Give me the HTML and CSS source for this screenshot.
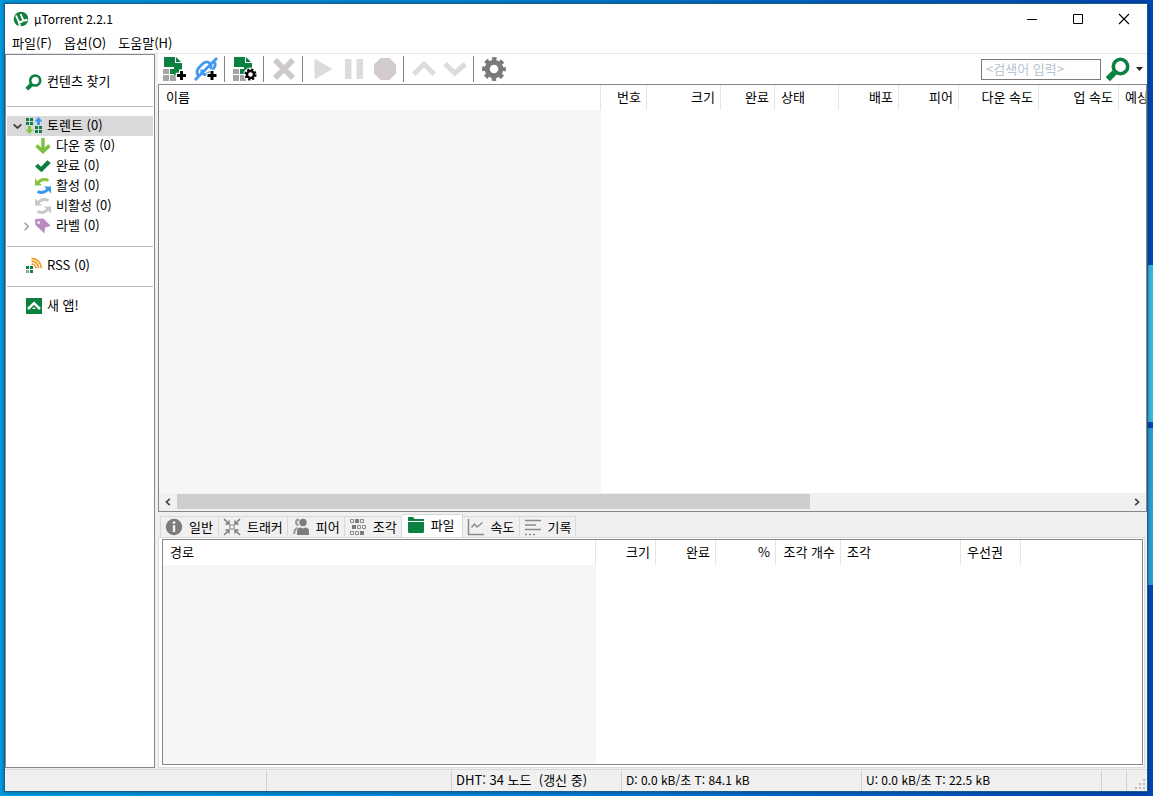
FILE: index.html
```html
<!DOCTYPE html>
<html lang="ko">
<head>
<meta charset="utf-8">
<title>µTorrent 2.2.1</title>
<link rel="stylesheet" href="styles.css">
</head>
<body class="desktop">
<div class="window">
  <header class="titlebar">
    <svg class="logo" width="16" height="16" viewBox="0 0 16 16"><circle cx="8" cy="8" r="7.3" fill="#12803f"/><path d="M3 4.5L5 9.2Q6.2 11.6 8.6 10.8Q10.4 10 9.6 7.8L7.6 3M9.8 8.6Q11 10.4 14.4 8.6M5.4 10Q6.6 13 7 15.4" fill="none" stroke="#fff" stroke-width="1.9"/></svg>
    <h1 class="title">µTorrent 2.2.1</h1>
    <div class="caption">
      <button class="cap-btn" aria-label="최소화"><svg width="12" height="12"><path d="M1 6.5H11" stroke="#000"/></svg></button>
      <button class="cap-btn" aria-label="최대화"><svg width="12" height="12"><path d="M1.5 1.5H10.5V10.5H1.5Z" stroke="#000" fill="none"/></svg></button>
      <button class="cap-btn" aria-label="닫기"><svg width="12" height="12"><path d="M1 1L11 11M11 1L1 11" stroke="#000" stroke-width="1.1"/></svg></button>
    </div>
  </header>
  <nav class="menubar">
    <button class="menu">파일(F)</button>
    <button class="menu">옵션(O)</button>
    <button class="menu">도움말(H)</button>
  </nav>

  <main class="workspace">
    <nav class="sidebar">
      <ul class="group group-find">
        <li><a class="item" href="#find"><span class="twist"></span>
          <svg class="ico" width="18" height="18" viewBox="0 0 18 18"><path d="M6.5 11.5L1.8 16.2" stroke="#0b8040" stroke-width="4"/><circle cx="10.2" cy="7.5" r="5" fill="#fff" stroke="#0b8040" stroke-width="2.6"/></svg>
          <span class="label">컨텐츠 찾기</span></a></li>
      </ul>
      <ul class="group group-torrents">
        <li><a class="item selected" href="#torrents">
          <svg class="twist" width="9" height="9" viewBox="0 0 9 9"><path d="M.7 2.3L4.5 6L8.3 2.3" fill="none" stroke="#404040" stroke-width="1.8"/></svg>
          <svg class="ico" width="18" height="18" viewBox="0 0 18 18"><path d="M1 1h3v3H1zM5 1h3v3H5zM1 5h3v3H1zM5 5h3v3H5zM10 9h3v3h-3zM14 9h3v3h-3zM10 13h3v3h-3zM14 13h3v3h-3z" fill="#0b8040"/><path d="M13.5 0L17.5 4.6H15V8H12V4.6H9.5Z" fill="#3b97ee"/><path d="M4.5 17L8.5 12.4H6V9H3V12.4H.5Z" fill="#86c440"/></svg>
          <span class="label">토렌트 (0)</span></a>
          <ul class="children">
            <li><a class="item" href="#down"><span class="twist"></span>
              <svg class="ico" width="18" height="18" viewBox="0 0 18 18"><path d="M9 1V14M2.5 8.500L9 14.600L15.500 8.500" fill="none" stroke="#7cc142" stroke-width="3.4"/></svg>
              <span class="label">다운 중 (0)</span></a></li>
            <li><a class="item" href="#done"><span class="twist"></span>
              <svg class="ico" width="18" height="18" viewBox="0 0 18 18"><path d="M1 9.5L4 6.8L7 9.8L13.4 3.2L16.8 6L7.5 15.2Z" fill="#0b8040"/></svg>
              <span class="label">완료 (0)</span></a></li>
            <li><a class="item" href="#active"><span class="twist"></span>
              <svg class="ico" width="18" height="18" viewBox="0 0 18 18"><path d="M1 1.5V8.5H8Z" fill="#86c440"/><path d="M4 6Q7.500 .8 14.500 3.400" fill="none" stroke="#86c440" stroke-width="2.8"/><g transform="rotate(180 9 9)"><path d="M1 1.5V8.5H8Z" fill="#3b97ee"/><path d="M4 6Q7.500 .8 14.500 3.400" fill="none" stroke="#3b97ee" stroke-width="2.8"/></g></svg>
              <span class="label">활성 (0)</span></a></li>
            <li><a class="item" href="#inactive"><span class="twist"></span>
              <svg class="ico" width="18" height="18" viewBox="0 0 18 18"><path d="M1 1.5V8.5H8Z" fill="#c9c9c9"/><path d="M4 6Q7.500 .8 14.500 3.400" fill="none" stroke="#c9c9c9" stroke-width="2.8"/><g transform="rotate(180 9 9)"><path d="M1 1.5V8.5H8Z" fill="#c9c9c9"/><path d="M4 6Q7.500 .8 14.500 3.400" fill="none" stroke="#c9c9c9" stroke-width="2.8"/></g></svg>
              <span class="label">비활성 (0)</span></a></li>
            <li><a class="item" href="#labels">
              <svg class="twist" width="9" height="9" viewBox="0 0 9 9"><path d="M2.6 .7L6.3 4.5L2.6 8.3" fill="none" stroke="#a0a0a0" stroke-width="1.6"/></svg>
              <svg class="ico" width="18" height="18" viewBox="0 0 18 18"><path fill-rule="evenodd" d="M1 2L9.5 1.5L16.8 9L11 10.5L10.5 16.5L1.5 8ZM4.6 4.2a1.3 1.3 0 1 0 .1 0Z" fill="#bb8abf"/></svg>
              <span class="label">라벨 (0)</span></a></li>
          </ul></li>
      </ul>
      <ul class="group">
        <li><a class="item" href="#rss"><span class="twist"></span>
          <svg class="ico" width="18" height="18" viewBox="0 0 18 18"><path d="M1 9h3v3H1zM5 9h3v3H5zM5 13h3v3H5z" fill="#0b8040"/><path d="M1 13h3v3H1z" fill="#a0a0a0"/><path d="M6.5 7A4.5 4.5 0 0 1 11 11.3M6.5 4.2A7.2 7.2 0 0 1 13.7 11.3M6.5 1.4A10 10 0 0 1 16.4 11.3" fill="none" stroke="#f29a1f" stroke-width="1.7"/></svg>
          <span class="label">RSS (0)</span></a></li>
      </ul>
      <ul class="group">
        <li><a class="item" href="#apps"><span class="twist"></span>
          <svg class="ico" width="18" height="18" viewBox="0 0 18 18"><path d="M1 1H17V17H1Z" fill="#0b8040"/><path d="M3 12L9 6.2L15 12" fill="none" stroke="#fff" stroke-width="2.5"/><path d="M7 12L9 10L11 12Z" fill="#fff"/></svg>
          <span class="label">새 앱!</span></a></li>
      </ul>
    </nav>

    <section class="content">
      <div class="toolbar">
        <button class="tool" aria-label="토렌트 추가"><svg width="24" height="24" viewBox="0 0 24 24"><path d="M1 0H12V6H19V18H11V10H1Z" fill="#0b8040"/><path d="M13 0V5H18Z" fill="#0b8040"/><path d="M0 12h6v5H0zM0 18h6v6H0zM7 18h6v6H7z" fill="#a5a5a5"/><path d="M7 12h6v5H7z" fill="#0b8040"/><path d="M18.5 12.5V24M12.7 18.2H24" stroke="#fff" stroke-width="5"/><path d="M18.5 14V23M14 18.5H23" stroke="#000" stroke-width="3"/></svg></button>
        <button class="tool" aria-label="URL로 추가"><svg width="24" height="24" viewBox="0 0 24 24"><g fill="none" stroke="#4499ee" stroke-width="2.8"><path d="M1 23L23 1"/><path d="M5 19Q1 15 5 10.5L8.5 7Q12.5 3 16 6.5Q18 9 16 11.5"/><path d="M8 12.5Q7 16 10 17.5Q13 18 16 15L19.5 11.5Q23 7.5 19.5 4.5"/></g><path d="M18 12.8V24M12.5 18.5H24" stroke="#fff" stroke-width="5"/><path d="M18 14V23M13.5 18.5H22.5" stroke="#000" stroke-width="3"/></svg></button>
        <span class="sep"></span>
        <button class="tool" aria-label="새 토렌트 만들기"><svg width="24" height="24" viewBox="0 0 24 24"><path d="M1 0H12V6H19V18H11V10H1Z" fill="#0b8040"/><path d="M13 0V5H18Z" fill="#0b8040"/><path d="M0 12h6v5H0zM0 18h6v6H0zM7 18h6v6H7z" fill="#a5a5a5"/><path d="M7 12h6v5H7z" fill="#0b8040"/><circle cx="17.5" cy="17.5" r="7" fill="#fff"/><circle cx="17.5" cy="17.5" r="3.5" fill="none" stroke="#000" stroke-width="2.4"/><circle cx="17.5" cy="17.5" r="5.1" fill="none" stroke="#000" stroke-width="2" stroke-dasharray="2.2 1.805"/></svg></button>
        <span class="sep"></span>
        <button class="tool" aria-label="삭제"><svg width="24" height="24" viewBox="0 0 24 24"><path d="M3 3L21 21M21 3L3 21" stroke="#cfcaca" stroke-width="5.6"/></svg></button>
        <span class="sep"></span>
        <button class="tool" aria-label="시작"><svg width="24" height="24" viewBox="0 0 24 24"><path d="M3.5 1.5L21.5 12L3.5 22.5Z" fill="#dcdcdc"/></svg></button>
        <button class="tool" aria-label="일시 정지"><svg width="24" height="24" viewBox="0 0 24 24"><path d="M3 2H9.5V22H3ZM14.5 2H21V22H14.5Z" fill="#dcdcda"/></svg></button>
        <button class="tool" aria-label="정지"><svg width="24" height="24" viewBox="0 0 24 24"><path d="M7.5 1H16.5L23 7.5V16.5L16.5 23H7.5L1 16.5V7.5Z" fill="#d2cccc"/></svg></button>
        <span class="sep"></span>
        <button class="tool" aria-label="위로"><svg width="24" height="24" viewBox="0 0 24 24"><path d="M1.8 17.200L12 7.200L22.200 17.200" fill="none" stroke="#dcdcda" stroke-width="5"/></svg></button>
        <button class="tool" aria-label="아래로"><svg width="24" height="24" viewBox="0 0 24 24"><path d="M1.8 6.800L12 16.200L22.200 6.800" fill="none" stroke="#dcdcda" stroke-width="5"/></svg></button>
        <span class="sep"></span>
        <button class="tool" aria-label="설정"><svg width="24" height="24" viewBox="0 0 24 24"><circle cx="12" cy="12" r="6.8" fill="none" stroke="#7a7a7e" stroke-width="5"/><circle cx="12" cy="12" r="10.2" fill="none" stroke="#7a7a7e" stroke-width="3.4" stroke-dasharray="4.4 3.611" stroke-dashoffset="2.2"/></svg></button>
        <div class="search">
          <input class="search-box" type="text" placeholder="&lt;검색어 입력&gt;" aria-label="검색어">
          <button class="search-go" aria-label="검색"><svg width="26" height="26" viewBox="0 0 26 26"><path d="M9.5 16.5L2.8 23.2" stroke="#0b8040" stroke-width="6"/><circle cx="15.5" cy="10.5" r="7.2" fill="#fff" stroke="#0b8040" stroke-width="3.6"/></svg></button>
          <button class="search-more" aria-label="검색 엔진"><svg width="8" height="4"><path d="M0 0H7L3.5 4Z" fill="#222"/></svg></button>
        </div>
      </div>

      <div class="list">
        <div class="list-view">
          <table class="grid torrents">
            <colgroup><col class="w442"><col class="w46"><col class="w74"><col class="w54"><col class="w64"><col class="w60"><col class="w60"><col class="w80"><col class="w80"><col class="w80"></colgroup>
            <thead><tr><th>이름</th><th class="num">번호</th><th class="num">크기</th><th class="num">완료</th><th>상태</th><th class="num">배포</th><th class="num">피어</th><th class="num">다운 속도</th><th class="num">업 속도</th><th>예상</th></tr></thead>
            <tbody><tr><td></td><td></td><td></td><td></td><td></td><td></td><td></td><td></td><td></td><td></td></tr></tbody>
          </table>
        </div>
        <div class="scroll">
          <button class="arrow" aria-label="왼쪽"><svg width="8" height="8"><path d="M5.8 .8L2.4 4L5.8 7.2" fill="none" stroke="#444" stroke-width="1.7"/></svg></button>
          <div class="track"><div class="thumb"></div></div>
          <button class="arrow" aria-label="오른쪽"><svg width="8" height="8"><path d="M2.2 .8L5.6 4L2.2 7.2" fill="none" stroke="#444" stroke-width="1.7"/></svg></button>
        </div>
      </div>

      <div class="details">
        <div class="tabs" role="tablist">
          <button class="tab" role="tab"><svg width="18" height="18" viewBox="0 0 18 18"><circle cx="9" cy="9" r="8.2" fill="#7c7c7c"/><path d="M9 7.200V14" stroke="#f0f0f0" stroke-width="2.400"/><circle cx="9" cy="4.600" r="1.400" fill="#f0f0f0"/></svg>일반</button>
          <button class="tab" role="tab"><svg width="18" height="18" viewBox="0 0 18 18"><path d="M7 7H11V11H7Z" fill="#fff" stroke="#7c7c7c"/><path d="M1 1L6 6M17 1L12 6M1 17L6 12M17 17L12 12M6 2.5V6H2.5M12 2.5V6H15.5M6 15.5V12H2.5M12 15.5V12H15.5" fill="none" stroke="#7c7c7c" stroke-width="1.5"/></svg>트래커</button>
          <button class="tab" role="tab"><svg width="18" height="18" viewBox="0 0 18 18"><circle cx="11" cy="4.5" r="3.7" fill="#7c7c7c"/><path d="M5 17V13.5Q5 9.5 9 9.5L11 10.5L13 9.5Q17 9.5 17 13.5V17Z" fill="#7c7c7c"/><path d="M7 1.3Q3.8 1.8 4.2 5Q4.5 7 6.5 7.5M5.5 10Q2.2 11 2.2 16" fill="none" stroke="#999" stroke-width="2.2"/></svg>피어</button>
          <button class="tab" role="tab"><svg width="18" height="18" viewBox="0 0 18 18"><g fill="none" stroke="#8a8a8a"><path d="M1.500 1.500h3v3h-3zM6.500 1.500h3v3h-3zM11.500 1.500h3v3h-3zM8.500 7.500h3v3h-3zM13.500 7.500h3v3h-3zM1.500 13.500h3v3h-3zM6.500 13.500h3v3h-3z"/></g><path d="M6 1h4v4H6zM3 7h4v4H3zM11 13h4v4h-4z" fill="#7c7c7c"/></svg>조각</button>
          <button class="tab active" role="tab" aria-selected="true"><svg width="18" height="18" viewBox="0 0 18 18"><path d="M1 1H6L7.500 3H17V5H1ZM1 6H17V15.500Q17 17 15.500 17H2.500Q1 17 1 15.500Z" fill="#0b8040"/></svg>파일</button>
          <button class="tab" role="tab"><svg width="18" height="18" viewBox="0 0 18 18"><path d="M1.500 1V16.500H17" fill="none" stroke="#8a8a8a" stroke-width="1.5"/><path d="M4.500 9.500L7.500 6L10 9L15.500 4.500" fill="none" stroke="#8a8a8a" stroke-width="1.4"/></svg>속도</button>
          <button class="tab" role="tab"><svg width="18" height="18" viewBox="0 0 18 18"><path d="M1 2.500H17M1 7H12M1 11.500H17" stroke="#8a8a8a" stroke-width="1.600"/><path d="M1 16.500H12" stroke="#8a8a8a" stroke-width="1.500" stroke-dasharray="2 2"/></svg>기록</button>
        </div>
        <div class="panel">
          <div class="panel-view">
            <table class="grid files">
              <colgroup><col class="w433"><col class="w60"><col class="w60"><col class="w60"><col class="w65"><col class="w120"><col class="w60"></colgroup>
              <thead><tr><th>경로</th><th class="num">크기</th><th class="num">완료</th><th class="num">%</th><th class="num">조각 개수</th><th>조각</th><th>우선권</th></tr></thead>
              <tbody><tr><td></td><td></td><td></td><td></td><td></td><td></td><td></td></tr></tbody>
            </table>
          </div>
        </div>
      </div>
    </section>
  </main>

  <footer class="status">
    <span class="cell message"></span>
    <span class="cell w185"></span>
    <span class="cell w170">DHT: 34 노드&nbsp; (갱신 중)</span>
    <span class="cell rate w240">D: 0.0 kB/초 T: 84.1 kB</span>
    <span class="cell rate rest">U: 0.0 kB/초 T: 22.5 kB</span>
    <span class="cell w25"></span>
    <span class="grip"><svg width="12" height="12"><path d="M8 0h2v2H8zM4 4h2v2H4zM8 4h2v2H8zM0 8h2v2H0zM4 8h2v2H4zM8 8h2v2H8z" fill="#bfbfbf"/></svg></span>
  </footer>
</div>
</body>
</html>
```
FILE: styles.css
```css
* { box-sizing: border-box; }

body, h1, ul { margin: 0; padding: 0; }
ul { list-style: none; }
svg { display: block; flex: none; }

.desktop {
  height: 100vh;
  padding: 3px 5px 4px 4px;
  overflow: hidden;
  display: flex;
  background:
    linear-gradient(#38b8de, #38b8de) right 265px / 5px 157px no-repeat,
    linear-gradient(#2aa0d8, #2aa0d8) right 428px / 5px 157px no-repeat,
    linear-gradient(90deg, #009be0, #0080d4 45%, #0047b4);
  color: #000;
  font: 13px/20px "Noto Sans CJK KR", sans-serif;
}

button, input { font: inherit; color: inherit; }
button {
  display: flex;
  align-items: center;
  justify-content: center;
  padding: 0;
  border: 0;
  background: none;
}

.window {
  flex: 1;
  min-width: 0;
  display: flex;
  flex-direction: column;
  border: 1px solid #1a5f8c;
  background: #fff;
  box-shadow: 0 0 4px rgba(0, 0, 0, .4);
}

/* Title bar and menu */
.titlebar { display: flex; align-items: center; height: 29px; padding-left: 8px; }
.title { margin-left: 5px; font-size: 12px; font-weight: 400; }
.caption { display: flex; margin-left: auto; }
.cap-btn { width: 46px; height: 29px; }
.menubar { display: flex; height: 20px; padding-left: 7px; gap: 12px; }

/* Workspace */
.workspace {
  flex: 1;
  min-height: 0;
  display: flex;
  gap: 3px;
  border-top: 1px solid #e6e6e6;
  background: #f0f0f0;
}
.sidebar {
  flex: 0 0 150px;
  margin-bottom: 1px;
  padding: 0 1px;
  border: 1px solid #828790;
  background: #fff;
}
.group { padding: 9px 0 10px; border-bottom: 1px solid #bdbdbd; }
.group:last-child { border-bottom: 0; }
.group-find { padding: 17px 0 14px; }
.item {
  display: flex;
  align-items: center;
  height: 20px;
  padding-left: 6px;
  color: #000;
  text-decoration: none;
  white-space: nowrap;
}
.children .item { padding-left: 15px; }
.selected { background: #d9d9d9; }
.twist { width: 9px; margin-right: 3px; }
.ico { margin-right: 4px; }
.label { padding-bottom: 2px; }

.content { flex: 1; min-width: 0; display: flex; flex-direction: column; }

/* Toolbar */
.toolbar {
  display: flex;
  align-items: center;
  height: 30px;
  padding-left: 1px;
  background: #fff;
}
.tool { width: 31px; height: 28px; }
.sep { width: 1px; height: 26px; margin: 0 4px 0 3px; background: #828282; }
.search { display: flex; align-items: center; margin-left: auto; padding-right: 3px; }
.search-box {
  width: 120px;
  height: 21px;
  padding: 0 4px 2px;
  border: 1px solid #7a7a7a;
  outline: 0;
  background: #fff;
}
.search-box::placeholder { color: #b4c4d0; opacity: 1; }
.search-go { width: 26px; margin: 0 5px 0 4px; }

/* Lists */
.list {
  flex: 1;
  min-height: 0;
  display: flex;
  flex-direction: column;
  border: 1px solid #828790;
  background: #fff;
}
.list-view { flex: 1; min-height: 0; overflow: hidden; }
.grid { height: 100%; table-layout: fixed; border-collapse: separate; border-spacing: 0; }
.torrents { width: 1040px; }
.files { width: 858px; }
.grid th {
  height: 25px;
  padding: 0 5px 2px 6px;
  border-right: 1px solid #e5e5e5;
  font-weight: 400;
  text-align: left;
  white-space: nowrap;
}
.grid th:first-child { padding-left: 7px; }
.grid .num { padding-left: 0; text-align: right; }
.grid td { padding: 0; }
.grid td:first-child { background: #f6f6f6; }

.scroll { display: flex; height: 18px; background: #f0f0f0; }
.arrow { width: 18px; }
.track { flex: 1; padding: 1px 0 2px; }
.thumb { width: 66.6%; height: 100%; background: #cdcdcd; }

/* Details pane */
.details { flex: 0 0 257px; display: flex; flex-direction: column; padding: 2px 2px 1px 0; }
.tabs { display: flex; align-items: flex-end; height: 23px; padding-left: 2px; }
.tab {
  height: 21px;
  padding: 0 4px;
  gap: 6px;
  border: 1px solid #d9d9d9;
  border-width: 1px 1px 0 0;
}
.tab:first-child { padding-right: 5px; border-left-width: 1px; }
.tab.active { height: 23px; padding: 0 7px 3px 5px; background: #fff; }
.panel { flex: 1; min-height: 0; padding: 1px 1px 2px 3px; border: 1px solid #dcdcdc; background: #fff; }
.panel-view { height: 100%; overflow: hidden; border: 1px solid #828790; }

/* Status bar */
.status {
  display: flex;
  height: 22px;
  padding-top: 1px;
  border-top: 1px solid #d7d7d7;
  background: #f0f0f0;
  line-height: 18px;
  white-space: pre;
}
.cell { padding-left: 4px; border-right: 1px solid #d0d0d0; }
.message { width: 262px; }
.rate { font-size: 12px; }
.rest { flex: 1; }
.grip { display: flex; align-items: flex-end; justify-content: flex-end; width: 20px; }

.w25 { width: 25px; }
.w46 { width: 46px; }
.w54 { width: 54px; }
.w60 { width: 60px; }
.w64 { width: 64px; }
.w65 { width: 65px; }
.w74 { width: 74px; }
.w80 { width: 80px; }
.w120 { width: 120px; }
.w170 { width: 170px; }
.w185 { width: 185px; }
.w240 { width: 240px; }
.w433 { width: 433px; }
.w442 { width: 442px; }
```
